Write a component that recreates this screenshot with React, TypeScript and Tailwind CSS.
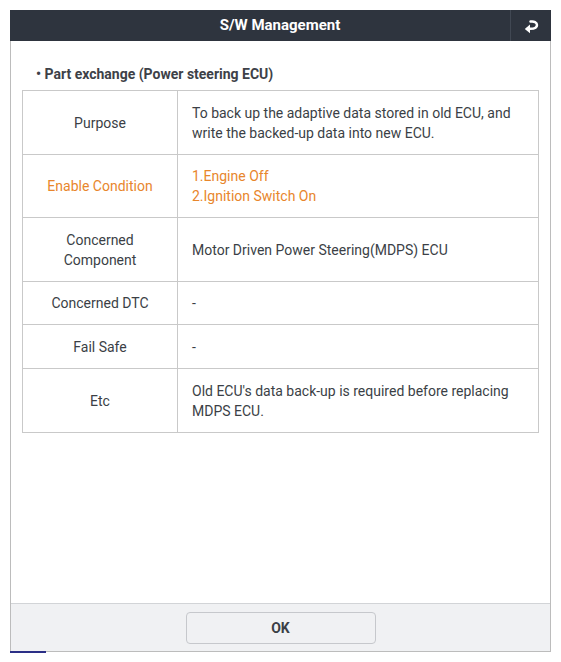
import React from 'react';

type Row = {
    label: string[];
    value: string[];
    height: string;
    accent?: boolean;
    last?: boolean;
};

const rows: Row[] = [
    {
        label: ['Purpose'],
        value: ['To back up the adaptive data stored in old ECU, and', 'write the backed-up data into new ECU.'],
        height: 'h-[64px]',
    },
    {
        label: ['Enable Condition'],
        value: ['1.Engine Off', '2.Ignition Switch On'],
        height: 'h-[63px]',
        accent: true,
    },
    {
        label: ['Concerned', 'Component'],
        value: ['Motor Driven Power Steering(MDPS) ECU'],
        height: 'h-[64px]',
    },
    { label: ['Concerned DTC'], value: ['-'], height: 'h-[43px]' },
    { label: ['Fail Safe'], value: ['-'], height: 'h-[44px]' },
    {
        label: ['Etc'],
        value: ["Old ECU's data back-up is required before replacing", 'MDPS ECU.'],
        height: 'h-[63px]',
        last: true,
    },
];

// hooked back arrow in the title bar
const ReturnIcon = () => (
    <svg width="18" height="16" viewBox="0 0 18 16" fill="none">
        <path
            d="M8.5 3.6C12 3 15 4.2 15 7c0 2.6-2.6 3.8-6.8 3.8H5.5"
            stroke="white"
            strokeWidth="2.5"
            strokeLinecap="round"
        />
        <path d="M8 6.4 2.8 10.9 8 15.2z" fill="white" />
    </svg>
);

export default function App() {
    return (
        <div className="w-[561px] h-[662px] bg-white pt-[10px] pl-[10px] font-['Roboto','Liberation_Sans',sans-serif] text-[14px] text-[#3b3f46]">
            <div className="w-[541px] h-[642px] flex flex-col border-x border-b border-[#bcbcbc] bg-white">
                {/* title bar */}
                <div className="h-[31px] flex bg-[#2e343e] -mx-px">
                    <div className="flex-1 flex items-center justify-center pl-[40px] text-white font-bold text-[15px]">
                        S/W Management
                    </div>
                    <div className="w-[41px] flex items-center justify-center border-l border-[#414853]">
                        <ReturnIcon />
                    </div>
                </div>

                <div className="flex-1 px-[11px]">
                    <div className="pt-[23px] mb-[6px] pl-[14px] leading-[20px] font-bold text-[14px] text-[#3d4148]">
                        • Part exchange (Power steering ECU)
                    </div>

                    <div className="border border-[#c9c9c9]">
                        {rows.map((row) => (
                            <div
                                key={row.label.join(' ')}
                                className={`flex ${row.height} ${row.last ? '' : 'border-b border-[#c9c9c9]'} ${
                                    row.accent ? 'text-[#e8862c]' : ''
                                }`}
                            >
                                <div className="w-[155px] border-r border-[#c9c9c9] flex flex-col items-center justify-center text-center leading-[20px]">
                                    {row.label.map((l) => (
                                        <span key={l}>{l}</span>
                                    ))}
                                </div>
                                <div className="flex-1 flex flex-col justify-center pl-[14px] leading-[20px]">
                                    {row.value.map((v) => (
                                        <span key={v}>{v}</span>
                                    ))}
                                </div>
                            </div>
                        ))}
                    </div>
                </div>

                {/* footer */}
                <div className="h-[48px] border-t border-[#d2d4d7] bg-[#f0f1f3] flex justify-center pt-[8px]">
                    <button className="w-[190px] h-[32px] rounded-[4px] border border-[#c6c8cc] bg-[#f0f1f3] font-bold text-[14px] text-[#3b3f46]">
                        OK
                    </button>
                </div>
            </div>
            <div className="w-[36px] h-[2px] -mt-px bg-[#2b2f86]" />
        </div>
    );
}
